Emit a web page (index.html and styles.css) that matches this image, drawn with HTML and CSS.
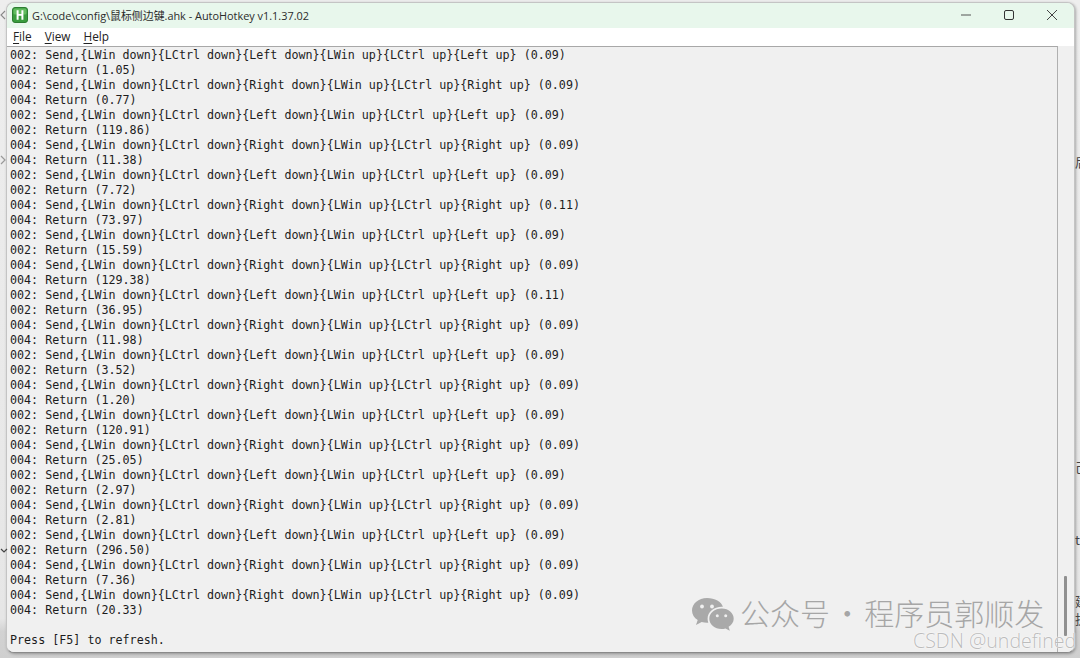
FILE: index.html
```html
<!DOCTYPE html>
<html lang="zh">
<head>
<meta charset="utf-8">
<title>AutoHotkey</title>
<link rel="stylesheet" href="styles.css">
</head>
<body>
<div class="desktop">
  <svg class="edge-mark edge-mark-top" width="6" height="10" viewBox="0 0 6 10"><path d="M5 1L1 5l4 4" fill="none" stroke="#888" stroke-width="1.100"/></svg>
  <svg class="edge-mark edge-mark-a" width="6" height="10" viewBox="0 0 6 10"><path d="M1 1l4 4-4 4" fill="none" stroke="#999" stroke-width="1.200"/></svg>
  <svg class="edge-mark edge-mark-b" width="8" height="6" viewBox="0 0 8 6"><path d="M1 1l3 3 3-3" fill="none" stroke="#444" stroke-width="1.200"/></svg>
  <div class="side-scrap scrap-a">后</div>
  <div class="side-scrap scrap-b">己</div>
  <div class="side-scrap scrap-c">t</div>
  <div class="side-scrap scrap-d">建</div>
  <div class="side-scrap scrap-e">执</div>
  <main class="window">
    <header class="titlebar">
      <div class="title-left">
        <svg class="app-icon" width="16" height="16" viewBox="0 0 16 16"><rect x="0.500" y="0.500" width="15" height="15" rx="2.500" fill="#3a9c3e" stroke="#2c7d31"/><rect x="1.500" y="1.500" width="13" height="6" rx="1.500" fill="#62bb5f"/><path d="M4.600 3.200h2v3.700h2.800V3.200h2v9.600h-2V8.800H6.600v4h-2z" fill="#fff"/></svg>
        <span class="title-text">G:\code\config\鼠标侧边键.ahk - AutoHotkey v1.1.37.02</span>
      </div>
      <div class="win-buttons">
        <svg width="10" height="10" viewBox="0 0 10 10"><path d="M0 5h10" stroke="#555" stroke-width="1"/></svg>
        <svg width="10" height="10" viewBox="0 0 10 10"><rect x="0.500" y="0.500" width="9" height="9" rx="1.500" fill="none" stroke="#333"/></svg>
        <svg width="10" height="10" viewBox="0 0 10 10"><path d="M0 0l10 10M10 0L0 10" stroke="#444" stroke-width="1"/></svg>
      </div>
    </header>
    <nav class="menubar">
      <span class="menu-item"><u>F</u>ile</span>
      <span class="menu-item"><u>V</u>iew</span>
      <span class="menu-item"><u>H</u>elp</span>
    </nav>
    <section class="client">
<pre class="log">002: Send,{LWin down}{LCtrl down}{Left down}{LWin up}{LCtrl up}{Left up} (0.09)
002: Return (1.05)
004: Send,{LWin down}{LCtrl down}{Right down}{LWin up}{LCtrl up}{Right up} (0.09)
004: Return (0.77)
002: Send,{LWin down}{LCtrl down}{Left down}{LWin up}{LCtrl up}{Left up} (0.09)
002: Return (119.86)
004: Send,{LWin down}{LCtrl down}{Right down}{LWin up}{LCtrl up}{Right up} (0.09)
004: Return (11.38)
002: Send,{LWin down}{LCtrl down}{Left down}{LWin up}{LCtrl up}{Left up} (0.09)
002: Return (7.72)
004: Send,{LWin down}{LCtrl down}{Right down}{LWin up}{LCtrl up}{Right up} (0.11)
004: Return (73.97)
002: Send,{LWin down}{LCtrl down}{Left down}{LWin up}{LCtrl up}{Left up} (0.09)
002: Return (15.59)
004: Send,{LWin down}{LCtrl down}{Right down}{LWin up}{LCtrl up}{Right up} (0.09)
004: Return (129.38)
002: Send,{LWin down}{LCtrl down}{Left down}{LWin up}{LCtrl up}{Left up} (0.11)
002: Return (36.95)
004: Send,{LWin down}{LCtrl down}{Right down}{LWin up}{LCtrl up}{Right up} (0.09)
004: Return (11.98)
002: Send,{LWin down}{LCtrl down}{Left down}{LWin up}{LCtrl up}{Left up} (0.09)
002: Return (3.52)
004: Send,{LWin down}{LCtrl down}{Right down}{LWin up}{LCtrl up}{Right up} (0.09)
004: Return (1.20)
002: Send,{LWin down}{LCtrl down}{Left down}{LWin up}{LCtrl up}{Left up} (0.09)
002: Return (120.91)
004: Send,{LWin down}{LCtrl down}{Right down}{LWin up}{LCtrl up}{Right up} (0.09)
004: Return (25.05)
002: Send,{LWin down}{LCtrl down}{Left down}{LWin up}{LCtrl up}{Left up} (0.09)
002: Return (2.97)
004: Send,{LWin down}{LCtrl down}{Right down}{LWin up}{LCtrl up}{Right up} (0.09)
004: Return (2.81)
002: Send,{LWin down}{LCtrl down}{Left down}{LWin up}{LCtrl up}{Left up} (0.09)
002: Return (296.50)
004: Send,{LWin down}{LCtrl down}{Right down}{LWin up}{LCtrl up}{Right up} (0.09)
004: Return (7.36)
004: Send,{LWin down}{LCtrl down}{Right down}{LWin up}{LCtrl up}{Right up} (0.09)
004: Return (20.33)

Press [F5] to refresh.</pre>
      <div class="scroll-gutter"><div class="scroll-thumb"></div></div>
    </section>
  </main>
  <div class="watermark">
    <svg class="wechat" width="43" height="35" viewBox="0 0 43 35">
      <path d="M16 1C7.500 1 1 6.700 1 13.500c0 4 2.200 7.300 5.700 9.600L5 28l5.700-3c1.700.5 3.400.8 5.300.8h1.300c-.5-1.300-.7-2.600-.7-4 0-6.800 6.300-12 14.200-12h1.100C30.500 4.800 23.900 1 16 1z" fill="#a9a9a9"/>
      <circle cx="11" cy="9.500" r="1.900" fill="#f0f0f0"/><circle cx="21" cy="9.500" r="1.900" fill="#f0f0f0"/>
      <path d="M30.500 11.500c-6.700 0-12.200 4.500-12.200 10.200S23.800 32 30.500 32c1.400 0 2.700-.2 4-.6l4.300 2.400-1.200-4c3.100-1.900 5.100-4.800 5.100-8.100 0-5.700-5.300-10.200-11.700-10.200z" fill="#a9a9a9"/>
      <circle cx="26.300" cy="18.800" r="1.500" fill="#f0f0f0"/><circle cx="34.700" cy="18.800" r="1.500" fill="#f0f0f0"/>
    </svg>
    <span class="wm-text">公众号 · 程序员郭顺发</span>
  </div>
  <div class="csdn">CSDN @undefined</div>
</div>
</body>
</html>
```
FILE: styles.css
```css
* { box-sizing: border-box; }
html, body { margin: 0; padding: 0; }
body { width: 1080px; height: 658px; overflow: hidden; background: #e4e4e4; }
.desktop {
  position: relative;
  width: 1080px;
  height: 658px;
  padding: 2px 5px 5px 6px;
  background: linear-gradient(#eeeeee, #e6e6e6 94%, #d2d2d2 96%, #cfcfcf);
  overflow: hidden;
}
.window {
  display: flex;
  flex-direction: column;
  height: 100%;
  background: #f0f0f0;
  border-radius: 8px;
  border: 1px solid #c4c4c4;
  border-bottom-color: #8a8a8a;
  box-shadow: 1px 1px 3px rgba(0,0,0,.3);
  overflow: hidden;
}
.titlebar {
  flex: none;
  height: 25px;
  display: flex;
  align-items: center;
  justify-content: space-between;
  background: #e8f7ec;
  padding: 0 0 2px 5px;
}
.title-left { display: flex; align-items: center; gap: 4px; }
.app-icon { display: block; }
.title-text {
  font: 10.900px "Open Sans", "Noto Sans CJK SC", sans-serif;
  color: #2b2b2b;
  white-space: nowrap;
}
.win-buttons { display: flex; align-items: center; gap: 33px; padding-right: 17px; }
.win-buttons svg { display: block; }
.menubar {
  flex: none;
  height: 18px;
  display: flex;
  align-items: center;
  gap: 13px;
  padding: 0 0 2px 6px;
  background: #fff;
  font: 11.800px "Open Sans", sans-serif;
  color: #222;
}
.menu-item u { text-decoration-thickness: 1px; text-underline-offset: 2px; }
.client { flex: 1; min-height: 0; display: flex; }
.log {
  flex: 1;
  margin: 0;
  padding: 1px 0 0 3px;
  background: #f0f0f0;
  border-top: 1px solid #a8a8a8;
  border-right: 1px solid #b0b0b0;
  font: 11.700px/15px "DejaVu Sans Mono", monospace;
  color: #1c1c1c;
  overflow: hidden;
}
.scroll-gutter {
  flex: none;
  width: 16px;
  padding: 530px 0 0 6px;
  background: #f0f0f0;
}
.scroll-thumb { width: 3px; height: 60px; background: #909090; border-radius: 1px; }
.edge-mark { position: absolute; left: 0; }
.edge-mark-top { top: 10px; }
.edge-mark-a { top: 155px; }
.edge-mark-b { top: 548px; }
.side-scrap {
  position: absolute;
  left: 1075px;
  font: 13px "Noto Sans CJK SC", sans-serif;
  color: #444;
}
.scrap-a { top: 152px; }
.scrap-b { top: 457px; }
.scrap-c { top: 530px; }
.scrap-d { top: 591px; }
.scrap-e { top: 609px; }
.watermark {
  position: absolute;
  left: 691px;
  top: 590px;
  display: flex;
  align-items: center;
  gap: 6px;
}
.wechat { display: block; margin-top: 4px; }
.wm-text {
  font: 300 30px "Noto Sans CJK SC", sans-serif;
  color: #a6a6a6;
  white-space: nowrap;
  word-spacing: -4.500px;
}
.csdn {
  position: absolute;
  left: 913px;
  top: 627px;
  font: 300 19.600px "Open Sans", sans-serif;
  color: #bcbcbc;
  text-shadow: 0 0 1px #fff, 0 0 2px #fff;
  white-space: nowrap;
}
```
